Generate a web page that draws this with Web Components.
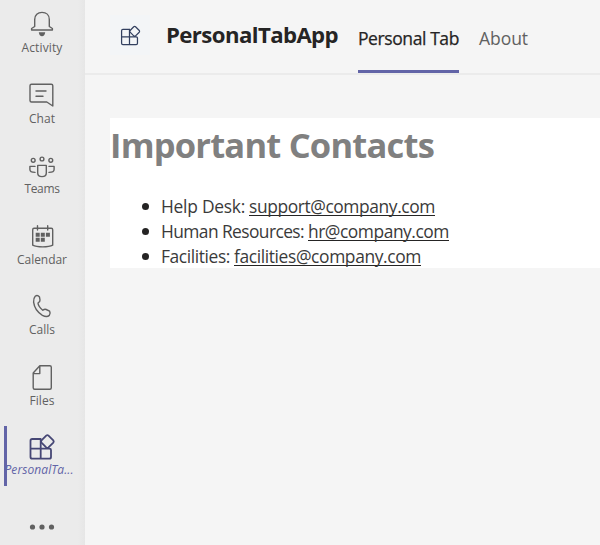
<!DOCTYPE html>
<html lang="en">
<head>
<meta charset="utf-8">
<title>PersonalTabApp</title>
<style>
body{margin:0;font-family:"Open Sans","Noto Sans",sans-serif;color:#252424;background:#f5f5f5;overflow:hidden}
</style>
</head>
<body>
<teams-shell></teams-shell>
<script>
const define=(name,html,init)=>customElements.define(name,class extends HTMLElement{
  connectedCallback(){
    if(this.shadowRoot)return;
    this.attachShadow({mode:'open'}).innerHTML=html;
    if(init)init(this,this.shadowRoot);
  }
});

const app='<path d="M40.6 16H32.2Q30.5 16 30.5 17.7V34Q30.5 35.7 32.2 35.7H49.3Q51 35.7 51 34V27Q51 25.7 49.5 25.7H30.5M40.7 16V35.7"/><path d="M46.2 12.6Q47.4 11.6 48.5 12.6L53.3 17.4Q54.2 18.5 53.3 19.6L48.5 24.4Q47.4 25.3 46.2 24.4L41.5 19.6Q40.5 18.5 41.5 17.4Z"/>';
const icons={
  bell:'<path d="M34.7 26.5V19.5C34.7 15 37.8 12.4 42 12.4S49.3 15 49.3 19.5V26.5L52.4 28.5V30H31.6V28.5Z"/><path fill="currentColor" stroke="none" d="M38.8 32.3H45.2Q44.7 36.2 42 36.2T38.8 32.3Z"/>',
  chat:'<path d="M31.5 13.2H51.3Q52.8 13.2 52.8 14.7V35L46.8 31H31.5Q30 31 30 29.5V14.7Q30 13.2 31.5 13.2ZM36 20H46M36 25.2H43"/>',
  teams:'<circle cx="33.2" cy="19.3" r="1.9"/><circle cx="42" cy="18" r="1.9"/><circle cx="50.8" cy="19.3" r="1.9"/><path d="M37.7 24.4H46.3V32Q46.3 35.6 42 35.6T37.7 32ZM35 25.4H29.9V28.5Q29.9 31.4 35 31.4M49 25.4H54.1V28.5Q54.1 31.4 49 31.4"/>',
  calendar:'<path d="M34 16.3H51.3Q52.7 16.3 52.7 17.7V33.2Q49.5 34.9 42.7 34.9T32.7 33.2V17.7Q32.7 16.3 34 16.3ZM37.5 13.7V18M47.7 13.7V18"/><path fill="currentColor" stroke="none" d="M35.7 20.7h4v4h-4zm5.1 0h4v4h-4zm5.1 0h4v4h-4zM35.7 25.8h4v4h-4zm5.1 0h4v4h-4z"/>',
  call:'<path d="M35.2 14.2Q37.5 12.5 39.5 15L40 18Q40.2 19.6 38 21Q38.2 24.5 42.8 28.3Q44.5 26.9 46.2 27.5L49.6 29.2Q50.8 31.2 49.3 33.4Q46.8 35.5 42.4 33.3Q34.7 28.8 33.6 20.2Q33.4 16 35.2 14.2Z"/>',
  file:'<path d="M39.8 12.7H49.8Q51.3 12.7 51.3 14.2V34.8Q51.3 36.3 49.8 36.3H34.7Q33.2 36.3 33.2 34.8V20ZM39.8 12.7V20.6H33.2"/>',
  app,
  more:'<g fill="currentColor" stroke="none"><circle cx="32.5" cy="33" r="2.6"/><circle cx="42" cy="33" r="2.6"/><circle cx="51.5" cy="33" r="2.6"/></g>'
};

define('ui-icon','<style>:host{display:block;width:40px;height:40px;stroke-width:1.4}svg{display:block;width:100%;height:100%;fill:none;stroke:currentColor;stroke-linejoin:round;stroke-linecap:round}</style><svg viewBox="22 0 40 40"></svg>',
  (host,root)=>{root.querySelector('svg').innerHTML=icons[host.getAttribute('name')]||''});

/* Spreads its text evenly over a given width in pixels. */
define('fit-text','<style>:host{display:inline-block;white-space:nowrap}span{display:inline-block}</style><span><slot></slot></span>',
  (host,root)=>{
    const w=+host.getAttribute('width'),s=root.querySelector('span'),n=host.textContent.length;
    s.style.letterSpacing=((w-s.getBoundingClientRect().width)/n)+'px';
    host.style.width=w+'px';
  });

define('rail-item',`<style>
:host{display:flex;flex-direction:column;align-items:center;box-sizing:border-box;height:70.5px;width:84px;color:#616161;position:relative;flex:none}
.label{font-size:12px;line-height:17px;height:17px;margin-top:-1px}
:host([active]){color:#464775}
:host([active]) .label{color:#6264a7;font-style:italic;margin-top:-2px;margin-left:-6px}
:host([active])::before{content:"";position:absolute;left:4px;top:3px;width:2.5px;height:60px;background:#6264a7}
</style><slot name="icon"></slot><div class="label"><slot></slot></div>`);

define('app-rail',`<style>
:host{display:flex;flex-direction:column;width:85px;height:545px;background:linear-gradient(90deg,#ebebeb 78px,#e6e6e6 85px);overflow:hidden;flex:none}
rail-item[active] ui-icon{stroke-width:1.8}
</style>
<rail-item><ui-icon slot="icon" name="bell"></ui-icon><fit-text width="41">Activity</fit-text></rail-item>
<rail-item><ui-icon slot="icon" name="chat"></ui-icon><fit-text width="26">Chat</fit-text></rail-item>
<rail-item><ui-icon slot="icon" name="teams"></ui-icon><fit-text width="35">Teams</fit-text></rail-item>
<rail-item><ui-icon slot="icon" name="calendar"></ui-icon><fit-text width="50">Calendar</fit-text></rail-item>
<rail-item><ui-icon slot="icon" name="call"></ui-icon><fit-text width="26">Calls</fit-text></rail-item>
<rail-item><ui-icon slot="icon" name="file"></ui-icon><fit-text width="25">Files</fit-text></rail-item>
<rail-item active><ui-icon slot="icon" name="app"></ui-icon><fit-text width="69">PersonalTa...</fit-text></rail-item>
<rail-item><ui-icon slot="icon" name="more"></ui-icon></rail-item>`);

define('tab-link',`<style>
:host{display:block;box-sizing:border-box;height:73px;padding-top:26px;font-size:17.5px;line-height:24px;color:#616161}
:host([selected]){color:#252424;-webkit-text-stroke:.25px;border-bottom:3px solid #6264a7}
</style><slot></slot>`);

define('app-header',`<style>
:host{display:flex;height:73px;border-bottom:2px solid #ebebeb;padding-left:25px;align-items:flex-start}
.tile{width:40px;height:40px;margin-top:15px;background:#f3f5f7;display:grid;place-items:center;color:#33405f}
.tile ui-icon{width:31px;height:31px;margin-top:-6px;stroke-width:1.6}
h1{margin:20.5px 20px 0 16px;font-size:22.2px;line-height:28px;font-weight:700;height:28px}
nav{display:flex;gap:20px}
</style>
<div class="tile"><ui-icon name="app"></ui-icon></div>
<h1><fit-text width="172">PersonalTabApp</fit-text></h1>
<nav><tab-link selected><fit-text width="101">Personal Tab</fit-text></tab-link><tab-link><fit-text width="49">About</fit-text></tab-link></nav>`);

define('contact-item',`<style>
:host{display:flex;align-items:center;height:25px;font-size:17.4px;line-height:25px;padding-left:32px;color:#3a3a3a}
i{width:7px;height:7px;border-radius:50%;background:#252424;margin-right:12px}
a{display:block;height:19px;line-height:19px;margin-left:4px;background:linear-gradient(#252424,#252424) 0 100%/100% 1.5px no-repeat}
</style><i></i><slot></slot><a><slot name="mail"></slot></a>`);

define('contacts-panel',`<style>
:host{display:block;margin:43px 0 0 25px;height:150px;background:#fff}
h2{margin:0;padding:4px 0 0 0;font-size:34.5px;line-height:46px;height:46px;color:#808080;font-weight:700}
.list{padding-top:26px}
</style>
<h2><fit-text width="324">Important Contacts</fit-text></h2>
<div class="list">
<contact-item><fit-text width="84">Help Desk:</fit-text><fit-text slot="mail" width="186">support@company.com</fit-text></contact-item>
<contact-item><fit-text width="143">Human Resources:</fit-text><fit-text slot="mail" width="141">hr@company.com</fit-text></contact-item>
<contact-item><fit-text width="69">Facilities:</fit-text><fit-text slot="mail" width="187">facilities@company.com</fit-text></contact-item>
</div>`);

define('teams-shell',`<style>
:host{display:flex;height:545px}
main{flex:1;min-width:0}
</style><app-rail></app-rail><main><app-header></app-header><contacts-panel></contacts-panel></main>`);
</script>
</body>
</html>
